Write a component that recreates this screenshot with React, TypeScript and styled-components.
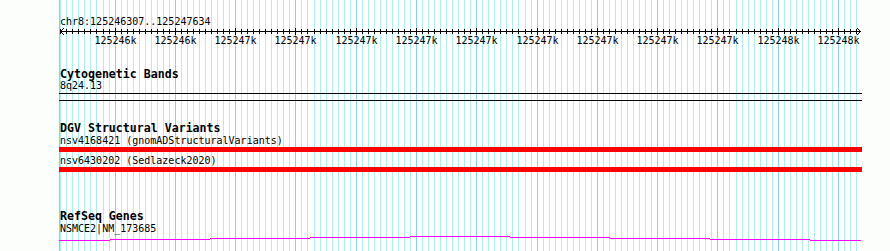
import React from "react";
import styled, { createGlobalStyle } from "styled-components";

const START = 125246307;
const END = 125247634;
const SPAN = 800;

// pixel column inside the panel for a base position
const toX = (bp: number) => Math.floor(((bp - START) * SPAN) / (END - START));

const steps: number[] = [];
for (let bp = Math.ceil(START / 10) * 10; bp <= END; bp += 10) steps.push(bp);

// perl-ish rounding (half to even) so 125246500 -> 125246k
const kLabel = (bp: number) => {
  const v = bp / 1000;
  const f = Math.floor(v);
  const d = v - f;
  const r = d > 0.5 ? f + 1 : d < 0.5 ? f : f % 2 === 0 ? f : f + 1;
  return `${r}k`;
};

const MONO = `"DejaVu Sans Mono", "Liberation Mono", monospace`;

const GlobalStyle = createGlobalStyle`
  html, body {
    margin: 0;
    background: #fbfefb;
  }
  body {
    font-family: ${MONO};
    color: #000;
  }
`;

const Page = styled.div`
  display: flex;
  height: 251px;
  padding-left: 59px;
  overflow: hidden;
`;

const Panel = styled.div`
  position: relative;
  width: 803px;
  height: 251px;
  background: #fff;
`;

const GridLayer = styled.svg`
  position: absolute;
  inset: 0;
  z-index: 0;
`;

const Content = styled.div`
  position: relative;
  z-index: 1;
  display: flex;
  flex-direction: column;
`;

const SmallText = styled.div<{ $top?: number }>`
  margin-top: ${({ $top }) => $top ?? 0}px;
  padding-left: 1px;
  font-family: ${MONO};
  font-size: 10px;
  line-height: 11px;
  white-space: pre;
`;

const RulerSvg = styled.svg`
  display: block;
  margin-top: 1px;
`;

const Track = styled.section<{ $gap: number }>`
  margin-top: ${({ $gap }) => $gap}px;
  display: flex;
  flex-direction: column;
`;

const TrackTitle = styled.div`
  padding-left: 1px;
  font-family: ${MONO};
  font-weight: bold;
  font-size: 11.6px;
  line-height: 12px;
  white-space: pre;
`;

const BandBox = styled.div`
  margin-top: 2px;
  height: 6px;
  border-top: 1px solid #000;
  border-bottom: 1px solid #000;
`;

const FeatureList = styled.div`
  display: flex;
  flex-direction: column;
  padding-top: 1px;
`;

const FeatureBar = styled.div<{ $color: string }>`
  margin: 1px 0 3px;
  height: 5px;
  background: ${({ $color }) => $color};
`;

const GeneSvg = styled.svg`
  display: block;
`;

const Grid = () => (
  <GridLayer width={803} height={251} shapeRendering="crispEdges">
    <line x1={0.5} y1={0} x2={0.5} y2={251} stroke="#87cefa" />
    {steps.map((bp) => (
      <line
        key={bp}
        x1={toX(bp) + 0.5}
        y1={0}
        x2={toX(bp) + 0.5}
        y2={251}
        stroke={bp % 100 === 0 ? "#87cefa" : "#afeeee"}
      />
    ))}
  </GridLayer>
);

const Ruler = () => (
  <RulerSvg width={803} height={20} shapeRendering="crispEdges">
    <g stroke="#000">
      <line x1={1} y1={3.5} x2={802} y2={3.5} />
      <path d="M1.5 3.5 L5.5 -0.5 M1.5 3.5 L5.5 7.5" fill="none" />
      <path d="M801.5 3.5 L797.5 -0.5 M801.5 3.5 L797.5 7.5" fill="none" />
      {steps.map((bp) => (
        <line
          key={bp}
          x1={toX(bp) + 0.5}
          y1={bp % 100 === 0 ? 0 : 1}
          x2={toX(bp) + 0.5}
          y2={bp % 100 === 0 ? 7 : 6}
        />
      ))}
    </g>
    {steps
      .filter((bp) => bp % 100 === 0)
      .map((bp) => (
        <text
          key={bp}
          x={toX(bp) + 0.5}
          y={16}
          textAnchor="middle"
          fontFamily="DejaVu Sans Mono, Liberation Mono, monospace"
          fontSize={10}
          fill="#000"
        >
          {kLabel(bp)}
        </text>
      ))}
  </RulerSvg>
);

// intron line of the transcript, drawn as a shallow stepped arc
const geneSteps = [6, 5, 4, 3, 2, 3, 4, 5, 6];
const GeneLine = () => {
  const d = geneSteps
    .map((y, i) => {
      const x1 = i === 0 ? 0 : 51 + (i - 1) * 100;
      const x2 = i === geneSteps.length - 1 ? 802 : 51 + i * 100;
      return `M${x1} ${y + 0.5} H${x2}`;
    })
    .join(" ");
  return (
    <GeneSvg width={803} height={8} shapeRendering="crispEdges">
      <path d={d} stroke="#ff00ff" fill="none" />
    </GeneSvg>
  );
};

const variants = [
  { name: "nsv4168421", source: "gnomADStructuralVariants" },
  { name: "nsv6430202", source: "Sedlazeck2020" },
];

const App = () => (
  <>
    <GlobalStyle />
    <Page>
      <Panel>
        <Grid />
        <Content>
          <SmallText $top={16}>chr8:125246307..125247634</SmallText>
          <Ruler />

          <Track $gap={20}>
            <TrackTitle>Cytogenetic Bands</TrackTitle>
            <SmallText>8q24.13</SmallText>
            <BandBox />
          </Track>

          <Track $gap={21}>
            <TrackTitle>DGV Structural Variants</TrackTitle>
            <FeatureList>
              {variants.map((v) => (
                <React.Fragment key={v.name}>
                  <SmallText>{`${v.name} (${v.source})`}</SmallText>
                  <FeatureBar $color="#ff0000" />
                </React.Fragment>
              ))}
            </FeatureList>
          </Track>

          <Track $gap={35}>
            <TrackTitle>RefSeq Genes</TrackTitle>
            <SmallText $top={1}>NSMCE2|NM_173685</SmallText>
            <GeneLine />
          </Track>
        </Content>
      </Panel>
    </Page>
  </>
);

export default App;
